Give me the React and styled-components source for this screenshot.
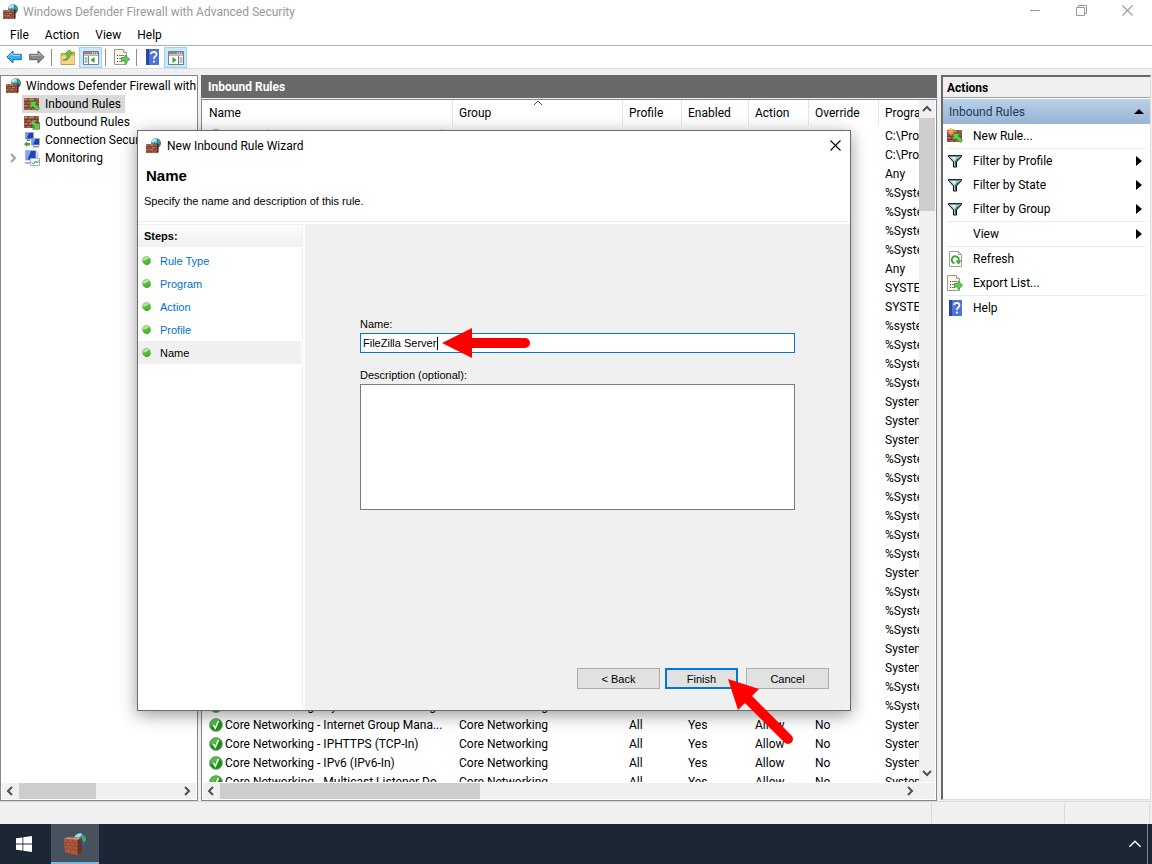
import React from "react";
import styled, { createGlobalStyle, css } from "styled-components";

const GlobalStyle = createGlobalStyle`
  * {
    box-sizing: border-box;
  }
  body {
    margin: 0;
    background: #f0f0f0;
    color: #000;
    font: 12px/16px Roboto, "Open Sans", sans-serif;
  }
  button, input, textarea {
    font: inherit;
    color: inherit;
    margin: 0;
  }
  svg {
    display: block;
    flex: none;
  }
`;

/* ---------- icons ---------- */

const Bricks = ({ x = 0, y = 0, w = 11, h = 9 }) => (
  <svg x={x} y={y} width={w} height={h} viewBox="0 0 11 9" preserveAspectRatio="none">
    <path d="M0 0h11v9H0z" fill="#a9604a" />
    <path
      d="M0 2.5h11M0 4.8h11M0 7h11M3 0v2.5M8 0v2.5M5.5 2.5v2.3M1.5 2.5v2.3M9.5 2.5v2.3M3 4.8V7M8 4.8V7M5.5 7v2M1.5 7v2"
      stroke="#6b3a2b"
      strokeWidth=".7"
      fill="none"
    />
    <path d="M.4 1h2M4 1h3M6.3 3.5h2.4M.4 5.8h2M4 5.8h3" stroke="#d39a80" strokeWidth=".7" />
  </svg>
);

const FirewallIcon = () => (
  <svg width="16" height="16" viewBox="1 0 16 16" aria-hidden="true">
    <circle cx="11" cy="5.2" r="5" fill="#2a6fc4" />
    <path d="M6.6 3.2C8 1 10.400 .2 12 .8c-.6 1.500-1.600 2-2.600 3.200L6.900 6z" fill="#c4e9f7" />
    <path d="M6.400 4.500c1-.6 2-.2 2.800.8L8.400 8.500C7 8 6.200 6.300 6.400 4.500zM12.800 1.300c1.600.600 2.800 2 3 3.700-.600 1.500-1.600 2-2.400 1.200s.200-2-.600-3z" fill="#3fae3c" />
    <path d="M10.400 2c1.500-.500 2 .500 1.600 2s-1.800 1.300-2.200.300.100-1.900.600-2.300z" fill="#8fd0f5" />
    <Bricks x={1} y={6} w={11} h={9} />
    <path d="m12 6.200 1.600-.9v8.700L12 15.500z" fill="#5a241a" />
  </svg>
);

const BigFirewallIcon = () => (
  <svg width="24" height="24" viewBox="0 0 24 24" aria-hidden="true">
    <circle cx="17" cy="7.500" r="6.300" fill="#2160bd" />
    <path d="M11.500 5C13 2 16 .9 18.500 1.500c1 1.500-.5 3-2 3.500s-2.500 3-3.500 3z" fill="#a5dcf5" />
    <path d="M11 7c1-2 2-2.500 3-2s1 3-.5 6c-1.500-.5-2.600-2-2.500-4zM19 2.500c2 1 3.500 2.500 4 4.500-.500 3-2 3.500-2.600 2.500S19 6 18.500 5z" fill="#43b83a" />
    <path d="M.9 6.800 14.500 8l.3 15.300L2 20.200z" fill="#b35a3c" />
    <path d="m14.500 8 4.200-2.300V20.500l-3.900 2.800z" fill="#70301f" />
    <path d="m.9 6.800 4-1.600 13.800.6L14.500 8z" fill="#d18a68" />
    <path
      d="m1 9.800 13.600 1.600M1.300 13l13.400 1.700M1.500 16.200 14.700 18.200M5 7.200v3M10 7.600v3.200M3 10.200v3M7.500 10.700v3.200M12 11.200v3.200M5 13.600v3.200M10 14.200v3.200M3 16.500v3.800M7.500 17.200v4M12 17.800v4.800"
      stroke="#8a4630"
      strokeWidth=".7"
      fill="none"
    />
  </svg>
);

const arrowFill = { fill: "#5fd04a", stroke: "#2b8a24", strokeWidth: 0.7, strokeLinejoin: "round" };

const InboundIcon = ({ spark }) => (
  <svg width="17" height="16" viewBox="0 0 17 16" aria-hidden="true">
    <Bricks x={0} y={2} w={15} h={12} />
    <path d="M6.500 5.500h7l-2.300 2.200 4.300 4.500-2.400 2.300L8.800 10.200 6.500 12.500z" {...arrowFill} />
    {spark && (
      <path d="M4 0v7M.500 3.500h7M1.500 1l5 5M6.500 1l-5 5" stroke="#f6a24a" strokeWidth="1.200" />
    )}
  </svg>
);

const OutboundIcon = () => (
  <svg width="17" height="16" viewBox="0 0 17 16" aria-hidden="true">
    <Bricks x={0} y={2} w={15} h={12} />
    <path d="M15.500 15.200h-7l2.300-2.200-4.300-4.500 2.400-2.300 4.300 4.300 2.300-2.300z" {...arrowFill} />
  </svg>
);

const ConnectionIcon = () => (
  <svg width="17" height="16" viewBox="0 0 17 16" aria-hidden="true">
    <path d="M1.500.500h8v6.500h-8z" fill="#1a3fb8" stroke="#9aa7b8" />
    <path d="M2 1h3L3 6H2z" fill="#6f9bf0" />
    <path d="M3 7.500h3V9H3z" fill="#76808c" />
    <path d="M7.500 6.500h8V13h-8z" fill="#1a3fb8" stroke="#9aa7b8" />
    <path d="M8 7h3.500L9 12.500H8z" fill="#6f9bf0" />
    <path d="M9 14h6v1.500H9z" fill="#8c97a4" />
    <path d="m0 12 3-2.500v1.500h3v2.500H3V15z" fill="#37a832" />
  </svg>
);

const MonitoringIcon = () => (
  <svg width="17" height="16" viewBox="0 0 17 16" aria-hidden="true">
    <path d="M1.500.500H12V10H1.500z" fill="#1a44c0" stroke="#a9b4c4" />
    <path d="M2 1h5L3.500 9.500H2z" fill="#7ea6f2" />
    <path d="M12.500 1.500h2V10h-2z" fill="#c9d0d8" />
    <path d="M1 12h7v2H1z" fill="#b0bac6" />
    <path d="M6.500 8.500h9v7h-9z" fill="#fff" stroke="#9fb4cc" />
    <path d="m7.500 12.500 2 1.500 2-3 1.500 2 2-2.500" stroke="#2f9e35" fill="none" />
  </svg>
);

const NavArrow = ({ forward }) => (
  <svg width="16" height="14" viewBox="0 0 16 14" aria-hidden="true">
    <path
      d="M.800 7 7 .900v3.400h8.300v5.400H7v3.400z"
      transform={forward ? "matrix(-1 0 0 1 16 0)" : undefined}
      fill={forward ? "#8a8a8a" : "#3aaeea"}
      stroke={forward ? "#5a5a5a" : "#1669ad"}
      strokeLinejoin="round"
    />
    <path
      d="M2.500 6.500 6 3v2.300h8.300"
      transform={forward ? "matrix(-1 0 0 1 16 0)" : undefined}
      stroke={forward ? "#c0c0c0" : "#9fe0fb"}
      fill="none"
    />
  </svg>
);

const FolderUpIcon = () => (
  <svg width="16" height="16" viewBox="0 0 16 16" aria-hidden="true">
    <path d="M1 4.500h5l1-1.500h7.500V15.500H1z" fill="#e8b866" stroke="#b98535" strokeWidth=".8" />
    <path d="M1.500 7h13v8h-13z" fill="#f6d48c" />
    <path d="M3 11c3.500 0 4.500-2.500 4.500-6H5L9 .800l3.500 4H10.300C10.300 9.500 7 12 3 11z" {...arrowFill} />
  </svg>
);

const PaneIcon = ({ right }) => (
  <svg width="16" height="15" viewBox="0 0 16 15" aria-hidden="true">
    <path d="M.500 1.500h15v13H.500z" fill="#fff" stroke="#7d7d7d" />
    <path d="M1 2h14v2.500H1z" fill="#8b8b8b" />
    <path d="M9 3h1M11 3h1M13 3h1" stroke="#fff" />
    <path d="M1 5.500h14" stroke="#b5b5b5" />
    {right ? (
      <>
        <path d="M10.500 6v8" stroke="#7d7d7d" />
        <path d="M11.500 8h3M11.500 10h3M11.500 12h3" stroke="#5a83b5" />
        <path d="M4.500 7v6l4-3z" fill="#2fa52a" />
      </>
    ) : (
      <>
        <path d="M5.500 6v8" stroke="#7d7d7d" />
        <path d="M1.500 8h3M1.500 10h3M1.500 12h3" stroke="#5a83b5" />
        <path d="M11.500 7v6l-4-3z" fill="#2fa52a" />
      </>
    )}
  </svg>
);

const ExportIcon = () => (
  <svg width="16" height="16" viewBox="0 0 16 16" aria-hidden="true">
    <path d="M.500.500h9l3 3v12H.500z" fill="#fbf7e2" stroke="#9a9a9a" />
    <path d="M9.500.500v3h3" fill="#fff" stroke="#9a9a9a" />
    <path d="M3 6.500h1M3 9.500h1M3 12.500h1" stroke="#333" />
    <path d="M5 6.500h5M5 9.500h3M5 12.500h3" stroke="#7a7fb5" />
    <path d="M7.500 8.500H11V6l4.700 4.200L11 14.500V12H7.500z" {...arrowFill} />
  </svg>
);

const HelpIcon = () => (
  <svg width="13" height="16" viewBox="0 0 13 16" aria-hidden="true">
    <path d="M0 0h13v16H0z" fill="#2946a8" />
    <path d="M3 0h10v16H3z" fill="#4f74d4" />
    <path d="M5 5.300c0-3.300 5.500-3.200 5.500.1 0 2-2.600 2.200-2.600 4.600" stroke="#fff" strokeWidth="1.700" fill="none" />
    <circle cx="7.900" cy="12.600" r="1.100" fill="#fff" />
  </svg>
);

const RefreshIcon = () => (
  <svg width="13" height="16" viewBox="0 0 13 16" aria-hidden="true">
    <path d="M.500.500h9l3 3v12H.500z" fill="#fff" stroke="#a0a0a0" />
    <path d="M9.500.500v3h3" fill="none" stroke="#a0a0a0" />
    <path d="M5.500 12.200a3.500 3.500 0 1 1 4.200-2.700" stroke="#36a832" strokeWidth="2" fill="none" />
    <path d="m6.500 9.300 6 .2-3 4.300z" fill="#36a832" />
  </svg>
);

const FilterIcon = () => (
  <svg width="14" height="13" viewBox="0 0 14 13" aria-hidden="true">
    <path d="M.500.500h13v1L8.500 7v5h-3V7L.500 1.500z" fill="#b9c4c4" stroke="#000" />
    <path d="M8.500 4 12.500 1.500 8 6.500v5H7V6z" fill="#0f8080" />
    <path d="M2.500 2h5v3.500z" fill="#eef4f4" />
    <path d="M1 1h12" stroke="#156868" />
  </svg>
);

const CheckIcon = () => (
  <svg width="14" height="14" viewBox="0 0 14 14" aria-hidden="true">
    <circle cx="7" cy="7" r="6.500" fill="#1c8f17" stroke="#9aa89a" />
    <path d="M1.500 8A5.500 5.500 0 0 1 11 3C8 4 6 8 1.500 8z" fill="#4fc043" />
    <path d="m4.300 7 2 3 3.200-7" stroke="#fff" strokeWidth="1.700" fill="none" />
  </svg>
);

const Bullet = () => (
  <svg width="9" height="9" viewBox="0 0 9 9" aria-hidden="true">
    <circle cx="4.500" cy="4.500" r="4.200" fill="#4fbf2f" />
    <path d="M.6 4.500a4 4 0 0 1 7-2.300C5.500 2.200 5 5 .6 4.500z" fill="#b4e3a6" />
    <path d="M8.400 5.500a4 4 0 0 1-5 2.600" stroke="#36952c" fill="none" />
  </svg>
);

const paths = {
  up: "M1 7 5 3l4 4",
  down: "m1 3 4 4 4-4",
  left: "M7 1 3 5l4 4",
  right: "m3 1 4 4-4 4",
};

const Chevron = ({ dir, size = 10, color = "#505050", weight = 2 }) => (
  <svg width={size} height={size} viewBox="0 0 10 10" aria-hidden="true">
    <path d={paths[dir]} stroke={color} strokeWidth={weight} fill="none" />
  </svg>
);

const Cross = ({ color }) => (
  <svg width="11" height="11" viewBox="0 0 11 11" aria-hidden="true">
    <path d="m.500.500 10 10M10.500.500l-10 10" stroke={color} strokeWidth="1.100" />
  </svg>
);

/* ---------- window chrome ---------- */

const Desktop = styled.div`
  position: relative;
  display: flex;
  flex-direction: column;
  height: 100vh;
  overflow: hidden;
`;

const TitleBar = styled.header`
  display: flex;
  align-items: center;
  height: 24px;
  padding-left: 3px;
  background: #fff;
  color: #999;
`;

const Title = styled.h1`
  flex: 1;
  margin: 0 0 0 4px;
  font-size: 12px;
  font-weight: 400;
`;

const PlainButton = styled.button`
  display: flex;
  align-items: center;
  justify-content: center;
  border: 0;
  padding: 0;
  background: transparent;
`;

const WindowButton = styled(PlainButton)`
  width: 46px;
  height: 21px;
  align-self: flex-start;
  &:last-child {
    margin-right: 2px;
  }
`;

const MenuBar = styled.nav`
  display: flex;
  height: 22px;
  padding-left: 2px;
  border-bottom: 1px solid #adadb4;
  background: #fff;
`;

const MenuItem = styled(PlainButton)`
  padding: 0 8px;
`;

const ToolBar = styled.div`
  display: flex;
  align-items: center;
  height: 23px;
  padding-left: 2px;
  border-bottom: 1px solid #dadada;
  background: #fff;
`;

const ToolButton = styled(PlainButton)`
  width: 23px;
  height: 21px;
  ${({ $on }) =>
    $on &&
    css`
      background: #cce8ff;
      border: 1px solid #99d1ff;
    `}
`;

const ToolDivider = styled.span`
  width: 1px;
  height: 17px;
  margin: 0 4px 0 3px;
  background: #8d8d8d;
`;

const Main = styled.main`
  flex: 1;
  min-height: 0;
  display: grid;
  grid-template-columns: 198px minmax(0, 1fr) 212px;
  grid-template-rows: minmax(0, 1fr);
  column-gap: 3px;
  padding-top: 6px;
`;

const StatusBar = styled.footer`
  display: flex;
  justify-content: flex-end;
  height: 23px;
  padding: 1px 2px 1px 0;
  border-top: 1px solid #d9d9d9;
`;

const StatusCell = styled.span`
  width: ${({ $width }) => $width}px;
  border-left: 1px solid #d9d9d9;
  &:last-child {
    border-right: 1px solid #d9d9d9;
  }
`;

/* ---------- scroll bars ---------- */

const ScrollBar = styled.div`
  display: flex;
  flex: none;
  flex-direction: ${({ $vertical }) => ($vertical ? "column" : "row")};
  ${({ $vertical }) => ($vertical ? "width: 16px" : "height: 16px")};
  background: #f0f0f0;
`;

const ScrollButton = styled(PlainButton)`
  flex: none;
  width: ${({ $vertical }) => ($vertical ? 16 : 17)}px;
  height: ${({ $vertical }) => ($vertical ? 18 : 16)}px;
  padding: 0 1px 0 0;
`;

const ScrollThumb = styled.div`
  ${({ $vertical, $length }) =>
    $vertical ? `height: ${$length}px` : `width: ${$length}px`};
  margin-${({ $vertical }) => ($vertical ? "bottom" : "right")}: auto;
  background: #cdcdcd;
`;

const Scroll = ({ vertical, length }) => (
  <ScrollBar $vertical={vertical}>
    <ScrollButton $vertical={vertical} aria-label={vertical ? "Scroll up" : "Scroll left"}>
      <Chevron dir={vertical ? "up" : "left"} />
    </ScrollButton>
    <ScrollThumb $vertical={vertical} $length={length} />
    <ScrollButton $vertical={vertical} aria-label={vertical ? "Scroll down" : "Scroll right"}>
      <Chevron dir={vertical ? "down" : "right"} />
    </ScrollButton>
  </ScrollBar>
);

/* ---------- console tree ---------- */

const TreePane = styled.section`
  display: flex;
  flex-direction: column;
  padding: 1px;
  border: 1px solid #828790;
  background: #fff;
`;

const Tree = styled.ul`
  flex: 1;
  margin: 0;
  padding: 0;
  overflow: hidden;
  list-style: none;
`;

const TreeItem = styled.li`
  display: flex;
  align-items: center;
  gap: ${({ $root }) => ($root ? 2 : 0)}px;
  height: 18px;
  padding-left: ${({ $root }) => ($root ? 4 : 6)}px;
  white-space: nowrap;
`;

const Twisty = styled.span`
  width: 14px;
`;

const TreeLabel = styled.span`
  display: flex;
  align-items: center;
  gap: 4px;
  height: 18px;
  padding: 0 4px 0 2px;
  background: ${({ $selected }) => ($selected ? "#d9d9d9" : "transparent")};
`;

/* ---------- rule list ---------- */

const ListPane = styled.section`
  display: flex;
  flex-direction: column;
  min-width: 0;
`;

const ListTitle = styled.h2`
  margin: 0 0 1px;
  padding: 4px 7px 3px;
  background: #696969;
  color: #fff;
  font-size: 12px;
  font-weight: 700;
`;

const ListFrame = styled.div`
  flex: 1;
  min-height: 0;
  display: flex;
  flex-direction: column;
  padding: 0 1px 1px;
  border: 1px solid #828790;
  background: #fff;
`;

const ListBody = styled.div`
  flex: 1;
  min-height: 0;
  display: flex;
  margin-bottom: 1px;
`;

const TableView = styled.div`
  flex: 1;
  min-width: 0;
  overflow: hidden;
`;

const Table = styled.table`
  width: 920px;
  table-layout: fixed;
  border-spacing: 0;
`;

const HeadCell = styled.th`
  position: relative;
  height: 26px;
  padding: 0 6px;
  border-right: 1px solid #e5e5e5;
  font-weight: 400;
  text-align: left;
`;

const SortMark = styled.span`
  position: absolute;
  top: -2px;
  left: 80px;
`;

const Cell = styled.td`
  height: 19px;
  padding: 0 6px;
  overflow: hidden;
  white-space: nowrap;
`;

const RuleName = styled.span`
  display: flex;
  align-items: center;
  gap: 2px;
`;

const HorizontalRow = styled.div`
  display: flex;
  background: #f0f0f0;
  & > :first-child {
    flex: 1;
  }
`;

const Corner = styled.span`
  width: 16px;
`;

/* ---------- actions ---------- */

const ActionsPane = styled.aside`
  border: 1px solid #dedede;
  border-top: 2px solid #696969;
  border-left: 2px solid #696969;
  margin: 0 1px 1px;
  background: #fff;
`;

const ActionsTitle = styled.h2`
  margin: 0 0 1px;
  padding: 3px 4px 1px;
  border-bottom: 1px solid #a0a0a0;
  background: #f0f0f0;
  font-size: 12px;
  font-weight: 700;
`;

const ActionsGroup = styled.h3`
  display: flex;
  align-items: center;
  justify-content: space-between;
  height: 25px;
  margin: 0;
  padding: 0 6px;
  background: linear-gradient(#b9d1ea, #98b4d2);
  color: #1e395b;
  font-size: 12px;
  font-weight: 400;
`;

const ActionList = styled.ul`
  margin: 0 4px;
  padding: 0;
  list-style: none;
`;

const ActionItem = styled.li`
  border-top: ${({ $ruled }) => ($ruled ? "1px solid #ebebeb" : "0")};
`;

const ActionButton = styled(PlainButton)`
  width: 100%;
  height: 24px;
  padding-right: 4px;
  justify-content: flex-start;
`;

const ActionIcon = styled.span`
  display: flex;
  justify-content: center;
  width: 16px;
  margin-right: 10px;
`;

const ActionText = styled.span`
  flex: 1;
  text-align: left;
`;

/* ---------- task bar ---------- */

const TaskBar = styled.div`
  display: flex;
  align-items: stretch;
  height: 40px;
  background: #1b2735;
`;

const TaskButton = styled(PlainButton)`
  width: 48px;
  ${({ $active }) =>
    $active &&
    css`
      margin-left: 3px;
      background: #47525d;
      box-shadow: inset 0 -2px #76b9ed;
    `}
`;

const TrayButton = styled(PlainButton)`
  width: 24px;
  margin-left: auto;
`;

const ShowDesktop = styled(PlainButton)`
  width: 5px;
  border-left: 1px solid #78818b;
`;

/* ---------- wizard ---------- */

const Dialog = styled.section`
  position: absolute;
  top: 130px;
  left: 137px;
  display: flex;
  flex-direction: column;
  width: 714px;
  height: 581px;
  border: 1px solid #6b6b6b;
  background: #fff;
  box-shadow: 0 4px 16px rgba(0, 0, 0, 0.4);
  font: 11px/16px "Liberation Sans", Arial, sans-serif;
`;

const DialogTitle = styled.header`
  display: flex;
  align-items: center;
  gap: 5px;
  height: 29px;
  padding: 0 7px 0 8px;
  font: 12px/16px Roboto, "Open Sans", sans-serif;
`;

const CloseButton = styled(PlainButton)`
  width: 16px;
  height: 16px;
  margin-left: auto;
`;

const DialogIntro = styled.div`
  height: 62px;
  padding: 8px 6px 0;
  border-bottom: 1px solid #ececec;
`;

const PageHeading = styled.h2`
  margin: 0 0 9px 2px;
  font-size: 15px;
  font-weight: 700;
  line-height: 16px;
`;

const PageText = styled.p`
  margin: 0;
`;

const DialogBody = styled.div`
  flex: 1;
  display: grid;
  grid-template-columns: 165px 1fr;
  column-gap: 2px;
  padding-top: 2px;
`;

const Steps = styled.nav`
  border-top: 1px solid #f0f0f0;
  border-right: 1px solid #f0f0f0;
`;

const StepsTitle = styled.h3`
  margin: 0;
  padding: 3px 6px;
  background: linear-gradient(#fdfdfd, #f0f0f0);
  font-size: 11px;
  font-weight: 700;
`;

const StepList = styled.ol`
  margin: 2px 1px 0 0;
  padding: 0;
  list-style: none;
`;

const Step = styled.li`
  display: flex;
  align-items: center;
  gap: 9px;
  height: 23px;
  padding-left: 4px;
  background: ${({ $current }) => ($current ? "#f0f0f0" : "transparent")};
`;

const StepLink = styled.a`
  color: ${({ $current }) => ($current ? "#000" : "#0070d0")};
  text-decoration: none;
`;

const Form = styled.form`
  display: flex;
  flex-direction: column;
  padding: 92px 21px 21px 55px;
  background: #f0f0f0;
`;

const Field = styled.div`
  position: relative;
  display: flex;
  flex-direction: column;
  margin: 0 34px 14px 0;
`;

const Label = styled.label`
  margin-bottom: 1px;
`;

const TextInput = styled.input`
  height: 20px;
  padding: 0 2px;
  border: 1px solid #0078d7;
  outline: 0;
  background: #fff;
`;

const TextArea = styled.textarea`
  height: 126px;
  border: 1px solid #7a7a7a;
  outline: 0;
  resize: none;
  background: #fff;
`;

const Caret = styled.span`
  position: absolute;
  left: 77px;
  bottom: 3px;
  width: 1px;
  height: 13px;
  background: #000;
`;

const FieldArrow = styled.svg`
  position: absolute;
  left: 82px;
  bottom: -5px;
`;

const ButtonRow = styled.div`
  display: flex;
  justify-content: flex-end;
  margin-top: auto;
`;

const PushButton = styled.button`
  width: ${({ $primary }) => ($primary ? 73 : 83)}px;
  height: 21px;
  padding: 0;
  border: ${({ $primary }) => ($primary ? "2px solid #0078d7" : "1px solid #adadad")};
  background: #e1e1e1;
`;

const FinishSlot = styled.div`
  position: relative;
  margin: 0 8px 0 5px;
`;

const FinishArrow = styled.svg`
  position: absolute;
  left: 62px;
  top: 10px;
  pointer-events: none;
`;

/* ---------- data ---------- */

const svchost = "%SystemRoot%\\system32\\svchost.exe";
const firefox = "C:\\Program Files\\Mozilla Firefox\\firefox.exe";

const columns = [
  ["Name", 250],
  ["Group", 170],
  ["Profile", 59],
  ["Enabled", 67],
  ["Action", 60],
  ["Override", 70],
  ["Program", 244],
];

const core = (name, program) => ({ name: `Core Networking - ${name}`, group: "Core Networking", program });
const rest = (...programs) => programs.map((program) => ({ program }));

const rules = [
  { name: "Firefox (C:\\Program Files\\Mozilla Firefox)", group: "", program: firefox },
  ...rest(firefox, "Any", svchost, svchost, svchost, svchost, "Any", "SYSTEM", "SYSTEM"),
  ...rest("%systemroot%\\system32\\svchost.exe", svchost, svchost, svchost, "System", "System", "System"),
  ...rest(svchost, svchost, svchost, svchost, svchost, svchost, "System"),
  ...rest(svchost, svchost, svchost, "System", "System", svchost),
  core("Dynamic Host Config...", svchost),
  core("Internet Group Mana...", "System"),
  core("IPHTTPS (TCP-In)", "System"),
  core("IPv6 (IPv6-In)", "System"),
  core("Multicast Listener Do...", "System"),
];

const actions = [
  { text: "New Rule...", icon: <InboundIcon spark /> },
  { text: "Filter by Profile", icon: <FilterIcon />, more: true, ruled: true },
  { text: "Filter by State", icon: <FilterIcon />, more: true },
  { text: "Filter by Group", icon: <FilterIcon />, more: true },
  { text: "View", more: true, ruled: true },
  { text: "Refresh", icon: <RefreshIcon />, ruled: true },
  { text: "Export List...", icon: <ExportIcon /> },
  { text: "Help", icon: <HelpIcon />, ruled: true },
];

const steps = ["Rule Type", "Program", "Action", "Profile", "Name"];

function ConsoleTree() {
  return (
    <TreePane>
      <Tree>
        <TreeItem $root>
          <FirewallIcon />
          <TreeLabel>Windows Defender Firewall with Advanced Security</TreeLabel>
        </TreeItem>
        <TreeItem>
          <Twisty />
          <TreeLabel $selected>
            <InboundIcon />
            Inbound Rules
          </TreeLabel>
        </TreeItem>
        <TreeItem>
          <Twisty />
          <TreeLabel>
            <OutboundIcon />
            Outbound Rules
          </TreeLabel>
        </TreeItem>
        <TreeItem>
          <Twisty />
          <TreeLabel>
            <ConnectionIcon />
            Connection Security Rules
          </TreeLabel>
        </TreeItem>
        <TreeItem>
          <Twisty>
            <Chevron dir="right" color="#a0a0a0" />
          </Twisty>
          <TreeLabel>
            <MonitoringIcon />
            Monitoring
          </TreeLabel>
        </TreeItem>
      </Tree>
      <Scroll length={77} />
    </TreePane>
  );
}

function RuleList() {
  return (
    <ListPane>
      <ListTitle>Inbound Rules</ListTitle>
      <ListFrame>
        <ListBody>
          <TableView>
            <Table>
              <colgroup>
                {columns.map(([name, width]) => (
                  <col key={name} width={width} />
                ))}
              </colgroup>
              <thead>
                <tr>
                  {columns.map(([name]) => (
                    <HeadCell key={name}>
                      {name}
                      {name === "Group" && (
                        <SortMark>
                          <Chevron dir="up" weight={1} />
                        </SortMark>
                      )}
                    </HeadCell>
                  ))}
                </tr>
              </thead>
              <tbody>
                {rules.map(({ name, group, program }, i) => (
                  <tr key={i}>
                    <Cell>
                      {name && (
                        <RuleName>
                          <CheckIcon />
                          {name}
                        </RuleName>
                      )}
                    </Cell>
                    <Cell>{group}</Cell>
                    <Cell>{name && "All"}</Cell>
                    <Cell>{name && "Yes"}</Cell>
                    <Cell>{name && "Allow"}</Cell>
                    <Cell>{name && "No"}</Cell>
                    <Cell>{program}</Cell>
                  </tr>
                ))}
              </tbody>
            </Table>
          </TableView>
          <Scroll vertical length={93} />
        </ListBody>
        <HorizontalRow>
          <Scroll length={260} />
          <Corner />
        </HorizontalRow>
      </ListFrame>
    </ListPane>
  );
}

function Actions() {
  return (
    <ActionsPane>
      <ActionsTitle>Actions</ActionsTitle>
      <ActionsGroup>
        Inbound Rules
        <svg width="10" height="5" viewBox="0 0 10 5" aria-hidden="true">
          <path d="M0 5 5 0l5 5z" fill="#000" />
        </svg>
      </ActionsGroup>
      <ActionList>
        {actions.map(({ text, icon, more, ruled }) => (
          <ActionItem key={text} $ruled={ruled}>
            <ActionButton>
              <ActionIcon>{icon}</ActionIcon>
              <ActionText>{text}</ActionText>
              {more && (
                <svg width="6" height="10" viewBox="0 0 6 10" aria-hidden="true">
                  <path d="m0 0 6 5-6 5z" fill="#000" />
                </svg>
              )}
            </ActionButton>
          </ActionItem>
        ))}
      </ActionList>
    </ActionsPane>
  );
}

function Wizard() {
  return (
    <Dialog role="dialog" aria-labelledby="wizard-title">
      <DialogTitle>
        <FirewallIcon />
        <span id="wizard-title">New Inbound Rule Wizard</span>
        <CloseButton aria-label="Close wizard">
          <Cross color="#000" />
        </CloseButton>
      </DialogTitle>
      <DialogIntro>
        <PageHeading>Name</PageHeading>
        <PageText>Specify the name and description of this rule.</PageText>
      </DialogIntro>
      <DialogBody>
        <Steps>
          <StepsTitle>Steps:</StepsTitle>
          <StepList>
            {steps.map((step) => (
              <Step key={step} $current={step === "Name"}>
                <Bullet />
                <StepLink href="#" $current={step === "Name"}>
                  {step}
                </StepLink>
              </Step>
            ))}
          </StepList>
        </Steps>
        <Form onSubmit={(e) => e.preventDefault()}>
          <Field>
            <Label htmlFor="rule-name">Name:</Label>
            <TextInput id="rule-name" defaultValue="FileZilla Server" />
            <Caret />
            <FieldArrow width="90" height="30" viewBox="0 0 90 30" aria-hidden="true">
              <path d="M0 15 30 0v10h53a5 5 0 0 1 0 10H30v10z" fill="#f00" />
            </FieldArrow>
          </Field>
          <Field>
            <Label htmlFor="rule-description">Description (optional):</Label>
            <TextArea id="rule-description" />
          </Field>
          <ButtonRow>
            <PushButton type="button">&lt; Back</PushButton>
            <FinishSlot>
              <PushButton $primary>Finish</PushButton>
              <FinishArrow width="70" height="70" viewBox="0 0 70 70" aria-hidden="true">
                <path d="M1 1 32 11 11 32z" fill="#f00" />
                <path d="m18 18 43 43" stroke="#f00" strokeWidth="10" strokeLinecap="round" />
              </FinishArrow>
            </FinishSlot>
            <PushButton type="button">Cancel</PushButton>
          </ButtonRow>
        </Form>
      </DialogBody>
    </Dialog>
  );
}

function App() {
  return (
    <>
      <GlobalStyle />
      <Desktop>
        <TitleBar>
          <FirewallIcon />
          <Title>Windows Defender Firewall with Advanced Security</Title>
          <WindowButton aria-label="Minimize">
            <svg width="11" height="11" viewBox="0 0 11 11">
              <path d="M0 5.500h10" stroke="#999" />
            </svg>
          </WindowButton>
          <WindowButton aria-label="Restore">
            <svg width="11" height="11" viewBox="0 0 11 11">
              <path d="M.500 2.500h8v8h-8zM2.500 2V.500h8v8H9" stroke="#999" fill="none" />
            </svg>
          </WindowButton>
          <WindowButton aria-label="Close">
            <Cross color="#999" />
          </WindowButton>
        </TitleBar>
        <MenuBar>
          {["File", "Action", "View", "Help"].map((item) => (
            <MenuItem key={item}>{item}</MenuItem>
          ))}
        </MenuBar>
        <ToolBar>
          <ToolButton aria-label="Back">
            <NavArrow />
          </ToolButton>
          <ToolButton aria-label="Forward">
            <NavArrow forward />
          </ToolButton>
          <ToolDivider />
          <ToolButton aria-label="Up one level">
            <FolderUpIcon />
          </ToolButton>
          <ToolButton $on aria-label="Show or hide console tree">
            <PaneIcon />
          </ToolButton>
          <ToolDivider />
          <ToolButton aria-label="Export list">
            <ExportIcon />
          </ToolButton>
          <ToolDivider />
          <ToolButton aria-label="Help">
            <HelpIcon />
          </ToolButton>
          <ToolButton $on aria-label="Show or hide action pane">
            <PaneIcon right />
          </ToolButton>
        </ToolBar>
        <Main>
          <ConsoleTree />
          <RuleList />
          <Actions />
        </Main>
        <StatusBar>
          <StatusCell $width={133} />
          <StatusCell $width={86} />
        </StatusBar>
        <TaskBar>
          <TaskButton aria-label="Start">
            <svg width="16" height="16" viewBox="0 0 16 16">
              <path d="M0 2.300 6.500 1.400v6.200H0zM7.300 1.300 16 0v7.600H7.300zM0 8.400h6.500v6.200L0 13.700zM7.300 8.400H16V16l-8.700-1.300z" fill="#fff" />
            </svg>
          </TaskButton>
          <TaskButton $active aria-label="Windows Defender Firewall">
            <BigFirewallIcon />
          </TaskButton>
          <TrayButton aria-label="Show hidden icons">
            <Chevron dir="up" size={14} color="#fff" weight={1} />
          </TrayButton>
          <ShowDesktop aria-label="Show desktop" />
        </TaskBar>
        <Wizard />
      </Desktop>
    </>
  );
}

export default App;
